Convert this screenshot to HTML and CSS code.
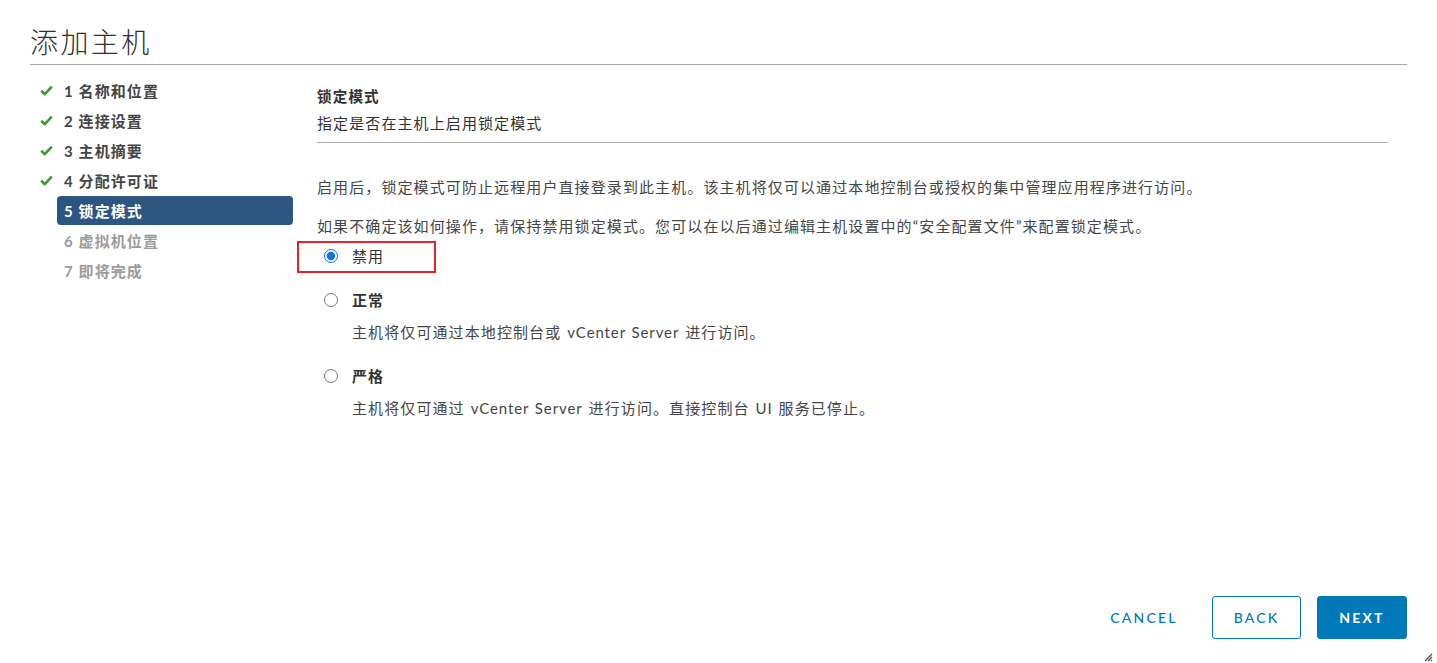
FILE: index.html
```html
<!DOCTYPE html>
<html lang="zh-CN">
<head>
<meta charset="utf-8">
<title>添加主机</title>
<link rel="stylesheet" href="styles.css">
</head>
<body>
<div class="page">
  <header class="title-bar">
    <h1 class="title">添加主机</h1>
  </header>
  <div class="main">
    <nav class="steps">
      <div class="step done">
        <span class="step-icon"><svg viewBox="0 0 13 11" width="13" height="11"><path d="M1.2 5.8 L4.8 9.2 L11.8 1.6" fill="none" stroke="#3c9b2b" stroke-width="2.6" stroke-linejoin="round"/></svg></span>
        <span class="step-label">1 名称和位置</span>
      </div>
      <div class="step done">
        <span class="step-icon"><svg viewBox="0 0 13 11" width="13" height="11"><path d="M1.2 5.8 L4.8 9.2 L11.8 1.6" fill="none" stroke="#3c9b2b" stroke-width="2.6" stroke-linejoin="round"/></svg></span>
        <span class="step-label">2 连接设置</span>
      </div>
      <div class="step done">
        <span class="step-icon"><svg viewBox="0 0 13 11" width="13" height="11"><path d="M1.2 5.8 L4.8 9.2 L11.8 1.6" fill="none" stroke="#3c9b2b" stroke-width="2.6" stroke-linejoin="round"/></svg></span>
        <span class="step-label">3 主机摘要</span>
      </div>
      <div class="step done">
        <span class="step-icon"><svg viewBox="0 0 13 11" width="13" height="11"><path d="M1.2 5.8 L4.8 9.2 L11.8 1.6" fill="none" stroke="#3c9b2b" stroke-width="2.6" stroke-linejoin="round"/></svg></span>
        <span class="step-label">4 分配许可证</span>
      </div>
      <div class="step active">
        <span class="step-icon"></span>
        <span class="step-label">5 锁定模式</span>
      </div>
      <div class="step todo">
        <span class="step-icon"></span>
        <span class="step-label">6 虚拟机位置</span>
      </div>
      <div class="step todo">
        <span class="step-icon"></span>
        <span class="step-label">7 即将完成</span>
      </div>
    </nav>
    <section class="content">
      <h2 class="section-title">锁定模式</h2>
      <p class="section-sub">指定是否在主机上启用锁定模式</p>
      <div class="divider"></div>
      <p class="para para-first">启用后，锁定模式可防止远程用户直接登录到此主机。该主机将仅可以通过本地控制台或授权的集中管理应用程序进行访问。</p>
      <p class="para para-second">如果不确定该如何操作，请保持禁用锁定模式。您可以在以后通过编辑主机设置中的“安全配置文件”来配置锁定模式。</p>
      <div class="options">
        <label class="option option-first">
          <span class="highlight"></span>
          <input class="radio" type="radio" name="mode" checked>
          <span class="option-label">禁用</span>
        </label>
        <label class="option option-gap">
          <input class="radio" type="radio" name="mode">
          <span class="option-label strong">正常</span>
        </label>
        <p class="option-desc">主机将仅可通过本地控制台或 <span class="latin">vCenter Server</span> 进行访问。</p>
        <label class="option option-gap">
          <input class="radio" type="radio" name="mode">
          <span class="option-label strong">严格</span>
        </label>
        <p class="option-desc">主机将仅可通过 <span class="latin">vCenter Server</span> 进行访问。直接控制台 <span class="latin">UI</span> 服务已停止。</p>
      </div>
    </section>
  </div>
  <footer class="footer">
    <button class="btn btn-flat" type="button">CANCEL</button>
    <button class="btn btn-outline" type="button">BACK</button>
    <button class="btn btn-primary" type="button">NEXT</button>
  </footer>
  <svg class="grip" viewBox="0 0 10 10" width="10" height="10"><path d="M9 2 L2 9 M9 5 L5 9 M9 8 L8 9" stroke="#555" stroke-width="1.4"/></svg>
</div>
</body>
</html>
```
FILE: styles.css
```css
* {
  box-sizing: border-box;
}

html, body {
  margin: 0;
  padding: 0;
  background: #ffffff;
}

body {
  font-family: "Lato", "Noto Sans CJK SC", sans-serif;
  color: #333333;
}

.page {
  position: relative;
  height: 663px;
  padding: 0 30px;
  display: flex;
  flex-direction: column;
}

.title-bar {
  padding: 23px 0 5px;
  border-bottom: 1px solid #a9a9a9;
}

.title {
  margin: 0;
  font-family: "Noto Sans CJK SC", sans-serif;
  font-size: 28px;
  line-height: 36px;
  font-weight: 300;
  letter-spacing: 2.4px;
  color: #313131;
}

.main {
  display: flex;
  flex: 1;
}

.steps {
  width: 263px;
  padding: 10px 0 0 10px;
  display: flex;
  flex-direction: column;
}

.step {
  display: flex;
  align-items: center;
  height: 30px;
}

.step-icon {
  width: 17px;
  height: 30px;
  display: flex;
  align-items: center;
}

.step-label {
  flex: 1;
  height: 30px;
  padding-left: 7px;
  display: flex;
  align-items: center;
  font-size: 15px;
  font-weight: 700;
  letter-spacing: 1.1px;
  color: #454545;
  border-radius: 4px;
}

.step.active .step-label {
  background: #2c5582;
  color: #ffffff;
  height: 29px;
  margin-top: 1px;
}

.step.todo .step-label {
  color: #9b9b9b;
}

.content {
  flex: 1;
  margin-left: 24px;
  margin-right: 19px;
  padding-top: 22px;
}

.section-title {
  margin: 0;
  font-size: 14.5px;
  line-height: 20px;
  font-weight: 700;
  letter-spacing: 1.2px;
  color: #313131;
}

.section-sub {
  margin: 6px 0 0;
  font-size: 15px;
  line-height: 20px;
  letter-spacing: 1.1px;
  color: #313131;
}

.divider {
  margin-top: 9px;
  border-top: 1px solid #ababab;
}

.para {
  margin: 0;
  font-size: 15px;
  line-height: 20px;
  letter-spacing: 1.1px;
  color: #454545;
}

.para-first {
  margin-top: 34px;
}

.para-second {
  margin-top: 19px;
}

.options {
  margin-top: 10px;
}

.option {
  position: relative;
  display: flex;
  align-items: center;
  height: 20px;
  padding-left: 7px;
}

.option-gap {
  margin-top: 24px;
}

.highlight {
  position: absolute;
  left: -20px;
  top: -5px;
  width: 139px;
  height: 32px;
  border: 2px solid #e8202a;
}

.radio {
  width: 14px;
  height: 14px;
  margin: 0;
  accent-color: #0b75f0;
}

.option-label {
  margin-left: 14px;
  font-size: 15px;
  line-height: 20px;
  letter-spacing: 1.1px;
  color: #333333;
}

.option-label.strong {
  font-weight: 700;
}

.option-desc {
  margin: 12px 0 0;
  padding-left: 35px;
  font-size: 15px;
  line-height: 20px;
  letter-spacing: 1.1px;
  color: #454545;
  word-spacing: 1px;
}

.latin {
  letter-spacing: 0.9px;
}

.footer {
  display: flex;
  justify-content: flex-end;
  gap: 16px;
  padding-bottom: 24px;
}

.btn {
  height: 43px;
  border-radius: 3px;
  font-family: "Lato", sans-serif;
  font-size: 14px;
  font-weight: 600;
  letter-spacing: 2.2px;
  padding: 0;
  cursor: pointer;
}

.btn-flat {
  width: 104px;
  background: transparent;
  border: none;
  color: #0079b8;
  font-weight: 500;
}

.btn-outline {
  width: 89px;
  background: #ffffff;
  border: 1px solid #0079b8;
  color: #0079b8;
  font-weight: 500;
}

.btn-primary {
  width: 90px;
  background: #0079b8;
  border: 1px solid #0079b8;
  color: #ffffff;
  font-weight: 700;
}

.grip {
  position: absolute;
  right: 4px;
  bottom: 1px;
}
```
